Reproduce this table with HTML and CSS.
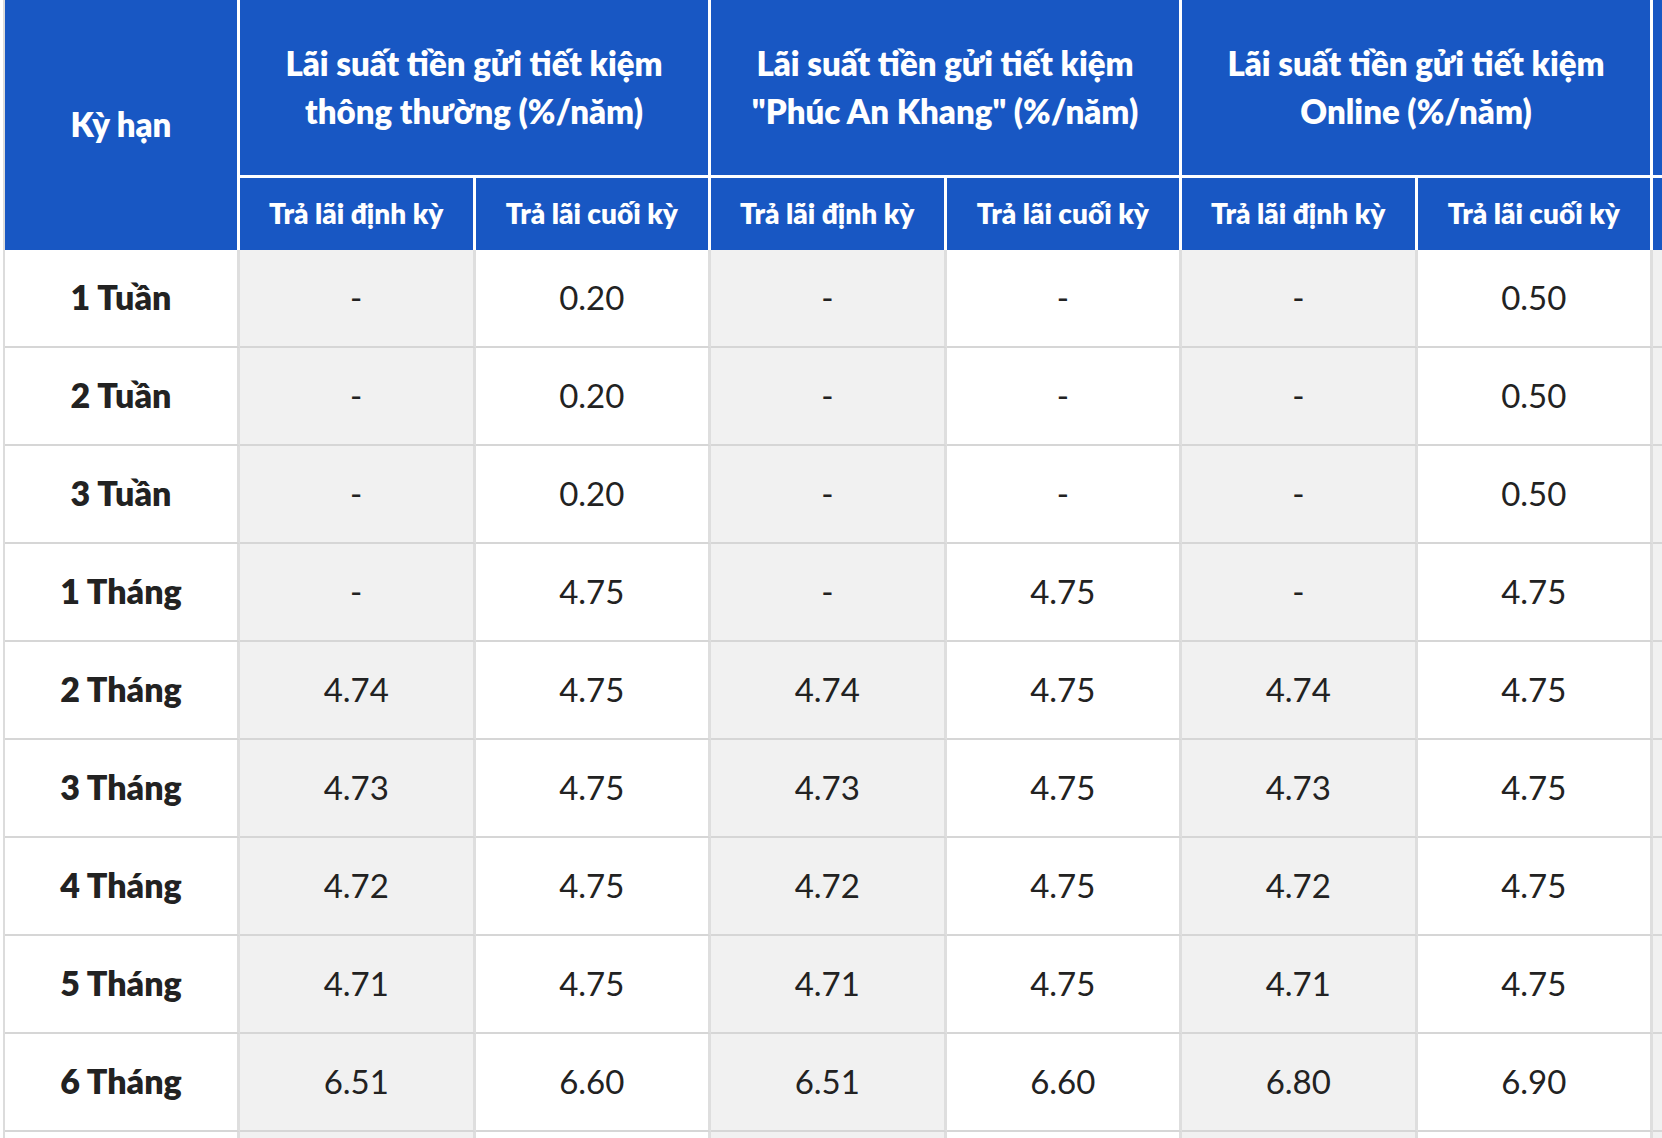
FILE: index.html
```html
<!DOCTYPE html>
<html lang="vi">
<head>
<meta charset="utf-8">
<title>Lãi suất tiền gửi tiết kiệm</title>
<link rel="stylesheet" href="styles.css">
</head>
<body>
<div class="wrap">
<table class="rates">
  <colgroup>
    <col class="c-term">
    <col class="c-val"><col class="c-val">
    <col class="c-val"><col class="c-val">
    <col class="c-val"><col class="c-val">
    <col class="c-val"><col class="c-val">
  </colgroup>
  <thead>
    <tr class="h1">
      <th rowspan="2" class="term-head">Kỳ hạn</th>
      <th colspan="2" class="group">Lãi suất tiền gửi tiết kiệm<br>thông thường (%/năm)</th>
      <th colspan="2" class="group">Lãi suất tiền gửi tiết kiệm<br>"Phúc An Khang" (%/năm)</th>
      <th colspan="2" class="group">Lãi suất tiền gửi tiết kiệm<br>Online (%/năm)</th>
      <th colspan="2" class="group"></th>
    </tr>
    <tr class="h2">
      <th>Trả lãi định kỳ</th><th>Trả lãi cuối kỳ</th>
      <th>Trả lãi định kỳ</th><th>Trả lãi cuối kỳ</th>
      <th>Trả lãi định kỳ</th><th>Trả lãi cuối kỳ</th>
      <th></th><th></th>
    </tr>
  </thead>
  <tbody>
    <tr><th>1 Tuần</th><td class="alt">-</td><td>0.20</td><td class="alt">-</td><td>-</td><td class="alt">-</td><td>0.50</td><td class="alt"></td><td></td></tr>
    <tr><th>2 Tuần</th><td class="alt">-</td><td>0.20</td><td class="alt">-</td><td>-</td><td class="alt">-</td><td>0.50</td><td class="alt"></td><td></td></tr>
    <tr><th>3 Tuần</th><td class="alt">-</td><td>0.20</td><td class="alt">-</td><td>-</td><td class="alt">-</td><td>0.50</td><td class="alt"></td><td></td></tr>
    <tr><th>1 Tháng</th><td class="alt">-</td><td>4.75</td><td class="alt">-</td><td>4.75</td><td class="alt">-</td><td>4.75</td><td class="alt"></td><td></td></tr>
    <tr><th>2 Tháng</th><td class="alt">4.74</td><td>4.75</td><td class="alt">4.74</td><td>4.75</td><td class="alt">4.74</td><td>4.75</td><td class="alt"></td><td></td></tr>
    <tr><th>3 Tháng</th><td class="alt">4.73</td><td>4.75</td><td class="alt">4.73</td><td>4.75</td><td class="alt">4.73</td><td>4.75</td><td class="alt"></td><td></td></tr>
    <tr><th>4 Tháng</th><td class="alt">4.72</td><td>4.75</td><td class="alt">4.72</td><td>4.75</td><td class="alt">4.72</td><td>4.75</td><td class="alt"></td><td></td></tr>
    <tr><th>5 Tháng</th><td class="alt">4.71</td><td>4.75</td><td class="alt">4.71</td><td>4.75</td><td class="alt">4.71</td><td>4.75</td><td class="alt"></td><td></td></tr>
    <tr><th>6 Tháng</th><td class="alt">6.51</td><td>6.60</td><td class="alt">6.51</td><td>6.60</td><td class="alt">6.80</td><td>6.90</td><td class="alt"></td><td></td></tr>
    <tr class="next"><th></th><td class="alt"></td><td></td><td class="alt"></td><td></td><td class="alt"></td><td></td><td class="alt"></td><td></td></tr>
  </tbody>
</table>
</div>
</body>
</html>
```
FILE: styles.css
```css
html, body {
  margin: 0;
  padding: 0;
  overflow: hidden;
  background: #ffffff;
}

.wrap {
  padding-left: 3px;
}

.rates {
  border-collapse: separate;
  border-spacing: 0;
  table-layout: fixed;
  width: 2121px;
  border-left: 2px solid #dcdcdc;
  font-family: "Lato", "Noto Sans", sans-serif;
  color: #222222;
}

.c-term { width: 235px; }
.c-val { width: 235.5px; }

.rates th,
.rates td {
  box-sizing: border-box;
  padding: 0 6px;
  text-align: center;
  vertical-align: middle;
}

.rates thead th {
  background: #1857c3;
  color: #ffffff;
  font-weight: 800;
  border-right: 3px solid #ffffff;
}

.h1 th {
  height: 178px;
  font-size: 33px;
  line-height: 48px;
  padding-bottom: 2px;
  border-bottom: 3px solid #ffffff;
}

.h1 th.term-head {
  border-bottom: 0;
  font-size: 33px;
}

.h2 th {
  height: 72px;
  font-size: 28px;
  line-height: 34px;
  padding-bottom: 2px;
}

.rates tbody th,
.rates tbody td {
  height: 98px;
  font-size: 33px;
  line-height: 40px;
  padding-bottom: 3px;
  border-right: 3px solid #dedede;
  border-bottom: 2px solid #d6d6d6;
  background: #ffffff;
}

.rates tbody th {
  font-size: 34px;
  font-weight: 800;
}

.rates tbody td {
  font-weight: 400;
}

.rates tbody td.alt {
  background: #f1f1f1;
}
```
